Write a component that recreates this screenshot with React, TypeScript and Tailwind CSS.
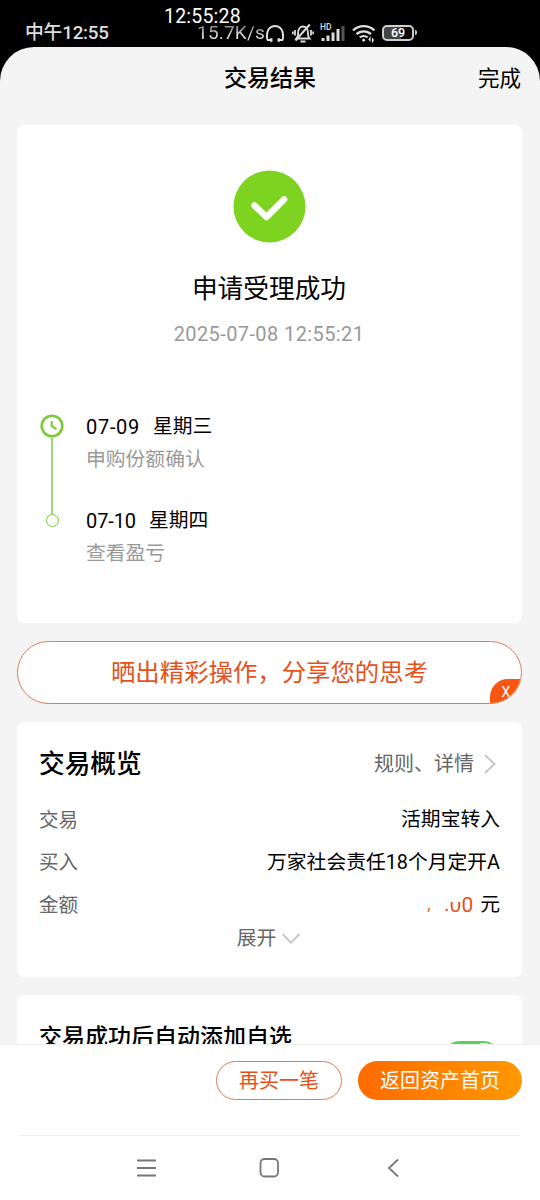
import type { ReactNode } from "react";

const STEPS = [
  { date: "07-09", day: "星期三", note: "申购份额确认", tracking: "tracking-[0.700px]" },
  { date: "07-10", day: "星期四", note: "查看盈亏", tracking: "tracking-[-0.100px]" }
];

function Headphones() {
  return (
    <svg className="h-5 w-5" viewBox="0 0 20 20" fill="none" stroke="#dedede" strokeWidth="2">
      <path d="M6.500 17H2.700C1.500 15.300 1.800 12.500 2.300 9.500a7.800 7.800 0 0 1 15.400 0c.5 3 .8 5.800-.4 7.500h-3.800" />
      <path d="M5 17h2.500M12.500 17H15" strokeWidth="3.600" />
    </svg>
  );
}

function BellOff() {
  return (
    <svg className="h-5 w-[22px]" viewBox="0 0 22 20" fill="none" stroke="#dedede" strokeWidth="1.800">
      <path d="M4.500 15.500h13c-1.500-1.500-1.600-3-1.600-6 0-3.500-1.900-6-4.900-6s-4.900 2.500-4.900 6c0 3-.1 4.500-1.600 6Z" />
      <path d="M8.500 18.500h5M3 7v5.500M.8 8.500v2.700M19 7v5.500M21.200 8.500v2.700" />
      <path d="M3.500 17.500 17.800 1.500" strokeWidth="2" />
    </svg>
  );
}

function Signal() {
  return (
    <svg className="h-5 w-[25px]" viewBox="0 0 25 20" fill="#dedede">
      <text x="0" y="6.500" fontSize="8.500" fontWeight="500" fontFamily="Roboto, sans-serif">HD</text>
      <rect x="1.500" y="15" width="3" height="3" />
      <rect x="6.500" y="12.500" width="3" height="5.500" />
      <rect x="11.500" y="9.500" width="3" height="8.500" />
      <rect x="16.500" y="6" width="3" height="12" />
      <rect x="21.500" y="3" width="3" height="15" fill="#555" />
    </svg>
  );
}

function Wifi() {
  return (
    <svg className="h-5 w-6" viewBox="0 0 24 20" fill="none" stroke="#dedede" strokeWidth="2.300">
      <path d="M1 7.500a15.500 15.500 0 0 1 21.500 0M4.500 11.200a10.500 10.500 0 0 1 14.500 0M7.800 14.500a6 6 0 0 1 7.800 0" />
      <circle cx="11.700" cy="17.200" r="1.100" fill="#dedede" strokeWidth="1" />
      <path d="M18 18.500v-3.500l-1.300 2M20.500 15v3.500l1.300-2" strokeWidth="1.200" />
    </svg>
  );
}

function StatusBar() {
  return (
    <div className="relative h-[47px] shrink-0 bg-black text-[#dedede]">
      <div className="flex h-full items-center pt-[18px]">
        <span className="ml-[25px] w-[172px] text-[18.800px] font-medium leading-5 tracking-[-0.200px]">中午12:55</span>
        <span className="w-[68px] bg-gradient-to-b from-[#8a8a8a] from-15% to-[#dedede] to-60% bg-clip-text text-[19px] leading-5 tracking-[0.200px] text-transparent">
          15.7K/s
        </span>
        <Headphones />
        <span className="ml-[7px] flex"><BellOff /></span>
        <span className="ml-[6px] flex"><Signal /></span>
        <span className="ml-[7px] flex"><Wifi /></span>
        <span className="ml-[6px] flex items-center">
          <span className="flex h-4 w-8 items-center justify-center rounded-[5px] border-2 border-[#cfcfcf] bg-gradient-to-r from-[#444] from-60% to-black to-60% pt-px text-[12.500px] font-medium leading-none text-white">
            69
          </span>
          <span className="ml-px h-[5px] w-[2px] rounded-r bg-[#cfcfcf]" />
        </span>
      </div>
      {/* floating seconds clock, sits over the system bar */}
      <span className="absolute left-[164px] top-[6px] text-[19.500px] leading-[22px] tracking-[0.200px] text-white">12:55:28</span>
    </div>
  );
}

function Card({ className, children }: { className: string; children: ReactNode }) {
  return <section className={`ml-[17px] w-[505px] shrink-0 rounded-[7px] bg-white ${className}`}>{children}</section>;
}

function Timeline() {
  return (
    <div className="mt-[67px] flex pl-[23px]">
      <div className="flex w-6 flex-col items-center">
        <svg className="h-6 w-6" viewBox="0 0 24 24" fill="none" stroke="#7dcb3c">
          <circle cx="12" cy="12" r="10.300" strokeWidth="2.600" />
          <path d="M11.700 7v5.200l4.800 2.800" strokeWidth="2.200" />
        </svg>
        <span className="h-[76px] w-[2px] bg-[#a2d37b]" />
        <span className="h-[13px] w-[13px] rounded-full border-[1.500px] border-[#7dcb3c]" />
      </div>
      <div className="ml-[22px] flex flex-col gap-[33px]">
        {STEPS.map((step) => (
          <div key={step.date}>
            <p className="flex gap-[13px] text-[20px] leading-[26px]">
              <span className={step.tracking}>{step.date}</span>
              <span className="text-[19.800px]">{step.day}</span>
            </p>
            <p className="mt-[4px] text-[19.800px] leading-[31px] text-[#999]">{step.note}</p>
          </div>
        ))}
      </div>
    </div>
  );
}

function Row({ label, children }: { label: string; children: ReactNode }) {
  return (
    <div className="flex h-[42.500px] items-center justify-between">
      <span className="text-[19.500px] text-[#666]">{label}</span>
      <span className="text-[19.800px]">{children}</span>
    </div>
  );
}

export default function App() {
  return (
    <div className="flex h-[1200px] w-[540px] flex-col overflow-hidden bg-black font-[Roboto,'Noto_Sans_CJK_SC',sans-serif] text-black">
      <StatusBar />
      <main className="flex min-h-0 flex-1 flex-col overflow-hidden rounded-t-[34px] bg-[#f4f4f4]">
        <header className="grid h-[60px] shrink-0 grid-cols-3 items-center pt-[4px]">
          <h1 className="col-start-2 text-center text-[23px] font-medium">交易结果</h1>
          <span className="pr-[19px] text-right text-[21.500px]">完成</span>
        </header>

        <Card className="mt-[18px] h-[498px]">
          <div className="flex flex-col items-center pt-[45px] pr-px">
            <svg className="h-[73px] w-[73px]" viewBox="0 0 73 73" fill="none">
              <circle cx="36.500" cy="36.500" r="36" fill="#7ed321" />
              <path d="m21.500 35.500 12 11.500L51 29.500" stroke="white" strokeWidth="6.500" strokeLinecap="round" strokeLinejoin="round" />
            </svg>
            <h2 className="mt-[26px] text-[25.700px] leading-10">申请受理成功</h2>
            <p className="mt-[12px] text-[20px] leading-[26px] tracking-[0.400px] text-[#999]">2025-07-08 12:55:21</p>
          </div>
          <Timeline />
        </Card>

        <div className="relative ml-[17px] mt-[18px] flex h-[63px] w-[505px] shrink-0 items-center justify-center overflow-hidden rounded-full border border-[#e07b55] bg-white text-[24.400px] text-[#e5511a]">
          <span className="pt-[2px]">晒出精彩操作，分享您的思考</span>
          <span className="absolute -bottom-px -right-px flex h-[25px] w-[32px] items-center justify-center rounded-tl-[18px] bg-[#f9560e] text-[14px] leading-none text-white">
            X
          </span>
        </div>

        <Card className="mt-[18px] h-[255px] px-[22px] pt-[21px]">
          <div className="mb-[14px] flex h-[42px] items-center justify-between">
            <h3 className="text-[25.700px] font-medium">交易概览</h3>
            <span className="flex items-center text-[20px] text-[#666]">
              规则、详情
              <svg className="ml-[10px] mr-[4px] h-5 w-3" viewBox="0 0 12 20" fill="none" stroke="#c8c8c8" strokeWidth="2">
                <path d="m1 1 9.500 9L1 19" />
              </svg>
            </span>
          </div>
          <Row label="交易">活期宝转入</Row>
          <Row label="买入">万家社会责任18个月定开A</Row>
          <Row label="金额">
            <span className="flex items-center">
              <span className="mr-[14px] text-[16px] text-[#e5511a]">,</span>
              <span className="text-[#e5511a]">.</span>
              {/* upper part of the first digit is masked */}
              <span className="bg-gradient-to-b from-transparent from-40% to-[#e5511a] to-40% bg-clip-text text-[21px] text-transparent">0</span>
              <span className="mr-[7px] text-[21px] text-[#e5511a]">0</span>
              元
            </span>
          </Row>
          <div className="flex h-6 items-center justify-center pr-[2px] text-[19.800px] text-[#666]">
            展开
            <svg className="ml-[6px] h-[11px] w-[18px]" viewBox="0 0 18 11" fill="none" stroke="#c8c8c8" strokeWidth="2">
              <path d="m.5 1 8.500 8.500L17.500 1" />
            </svg>
          </div>
        </Card>

        <Card className="mt-[18px] flex h-[100px] justify-between px-[22px]">
          <h3 className="mt-[27px] text-[23px] font-medium leading-8">交易成功后自动添加自选</h3>
          <span className="mr-[2px] mt-[46px] flex h-7 w-[53px] justify-end rounded-full bg-[#5bd15b] p-[2px]">
            <span className="h-6 w-6 rounded-full bg-white" />
          </span>
        </Card>
      </main>

      <footer className="flex h-[91px] shrink-0 items-start justify-end gap-[16px] border-t border-[#eee] bg-white pr-[18px] pt-[16px] text-[20px]">
        <button className="h-[39px] w-[126px] rounded-full border border-[#e07b55] pt-px leading-none text-[#e5511a]">再买一笔</button>
        <button className="h-[39px] w-[164px] rounded-full bg-gradient-to-r from-[#ff6a00] to-[#ff9800] pt-px leading-none text-white">
          返回资产首页
        </button>
      </footer>
      <nav className="h-[65px] shrink-0 bg-white px-[20px]">
        <div className="flex h-full items-center justify-center border-t border-[#eee] pr-[2px]">
          <svg className="h-6 w-[264px]" viewBox="0 0 264 24" fill="none" stroke="#777" strokeWidth="1.800">
            <path d="M0 4.500h19M0 12h19M0 19.500h19" />
            <rect x="123.500" y="3" width="17.500" height="17.500" rx="4" />
            <path d="m261 3.500-9 8.500 9 8.500" />
          </svg>
        </div>
      </nav>
    </div>
  );
}
